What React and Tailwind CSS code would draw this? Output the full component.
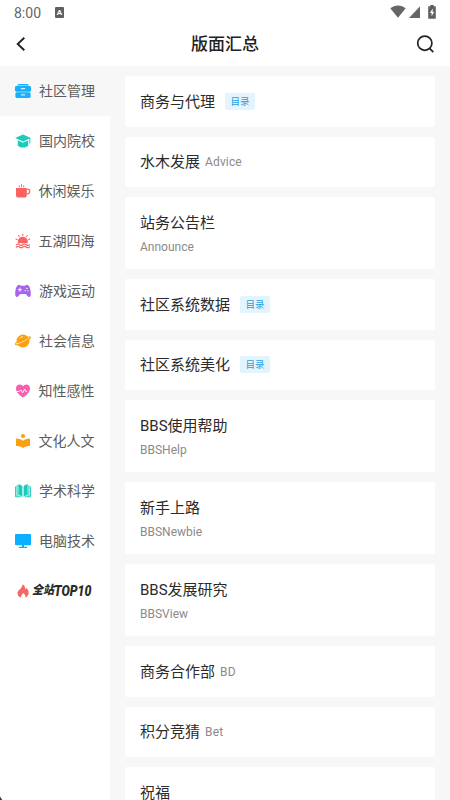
import React, { useState } from 'react'

const CabinetIcon = () => (
  <svg viewBox="0 0 16 16" className="w-4 h-4" fill="#16b0fb">
    <path d="M3.400 .9h9.200l1.600 1.600H1.800z" />
    <rect x="0" y="3.100" width="16" height="5.600" rx="1.400" />
    <rect x="0.400" y="9.300" width="15.200" height="5.600" rx="1.400" />
    <path d="M6.300 5.700h3.400M6.300 11.900h3.400" stroke="#fff" strokeWidth="1" strokeLinecap="round" />
  </svg>
)

const SchoolIcon = () => (
  <svg viewBox="0 0 16 16" className="w-4 h-4" fill="#1bcbbb">
    <path d="M8 1.500 15.800 5 8 8.600.2 5z" />
    <path d="M2.800 7.300 8 9.700l5.200-2.400v5.400C11.600 14 9.900 14.600 8 14.600S4.400 14 2.800 12.700z" />
    <path d="M14.300 5h1v5.600h-1z" />
  </svg>
)

const CupIcon = () => (
  <svg viewBox="0 0 16 16" className="w-4 h-4" fill="#fa6262">
    <path d="M1 5h10.800v7a2.600 2.600 0 0 1-2.600 2.600H3.600A2.600 2.600 0 0 1 1 12z" />
    <path d="M11.500 6.100h1.200c1.400 0 2 .8 2 2.100 0 1.700-.9 2.800-3.200 3" fill="none" stroke="#fa6262" strokeWidth="1.300" />
    <path d="M4.300 4V2.600M6.500 4V1.200M8.700 4V2.600" stroke="#fa6262" strokeWidth=".9" strokeLinecap="round" />
  </svg>
)

const SunsetIcon = () => (
  <svg viewBox="0 0 16 16" className="w-4 h-4" fill="none" stroke="#fa6262" strokeLinecap="round">
    <path d="M3 10.400C2.200 6.600 4.600 3.800 7.800 3.800s5.700 2.800 4.900 6.600l-2.400-.5-2.500.7-2.500-.7z" fill="#fa6262" stroke="none" />
    <path d="M7.800 2.500V1.300M4.300 3.500l-.8-1M11.400 3.500l.8-1M2 6.600l-1-.5M13.700 6.600l1-.5" strokeWidth="1.100" />
    <path d="M1.300 11.700q1.600-1.400 3.200 0t3.300 0 3.300 0 3.300 0M1.300 14q1.600-1.400 3.200 0t3.300 0 3.300 0 3.300 0" strokeWidth="1.200" />
  </svg>
)

const GamepadIcon = () => (
  <svg viewBox="0 0 16 16" className="w-4 h-4" fill="#a566ed">
    <path d="M3.200 2.100c1.500-.6 2.300.4 3.100.7h3.400c.8-.3 1.600-1.300 3.100-.7 1.900.8 3 5 3 9.200 0 2.900-2.300 3.500-3.500 1.500-.7-1.200-1.200-1.900-2.200-1.900H5.900c-1 0-1.500.7-2.200 1.900C2.500 14.800.2 14.200.2 11.300c0-4.200 1.100-8.400 3-9.200z" />
    <path d="M4.900 5.100v3.200M3.300 6.700h3.200" stroke="#fff" strokeWidth="1" strokeLinecap="round" />
    <circle cx="11.900" cy="5.400" r=".7" fill="#fff" />
    <circle cx="10.200" cy="7.600" r=".7" fill="#fff" />
    <circle cx="12.900" cy="7.800" r=".6" fill="#fff" />
  </svg>
)

const PlanetIcon = () => (
  <svg viewBox="0 0 16 16" className="w-4 h-4">
    <circle cx="8" cy="8" r="6.500" fill="#fca012" />
    <path d="M2 9.200C1 10.300.8 11 1.200 11.500c1.200.7 4.900-.5 8.100-2.200 3.200-1.800 5.600-3.700 5.900-4.700" fill="none" stroke="#fff" strokeWidth=".8" transform="translate(0 -1.200)" />
    <path d="M2 8.500C.8 9.700.2 10.600.7 11.100c.9.800 5-.5 8.300-2.300 3.500-1.900 6.600-3.900 6.300-4.900-.2-.6-1.200-.4-2.100-.1" fill="none" stroke="#fca012" strokeWidth="1.100" transform="translate(0 .4)" />
    <path d="M5.200 4.700q1-1.100 2.400-1" fill="none" stroke="#fff" strokeWidth=".8" strokeLinecap="round" />
  </svg>
)

const HeartIcon = () => (
  <svg viewBox="0 0 16 16" className="w-4 h-4">
    <path d="M8 14.600C4.700 12.300 1 9.300 1 5.500 1 3.100 2.600 1.500 4.600 1.500c1.500 0 2.700.7 3.400 1.900.7-1.200 1.900-1.900 3.400-1.900C13.400 1.500 15 3.100 15 5.500c0 3.800-3.700 6.800-7 9.100z" fill="#f95faf" />
    <path d="M2 8.500h2.300l1.400-1.600 1.900 3 2-3.700 1.300 2.300H12" fill="none" stroke="#fff" strokeWidth=".9" strokeLinejoin="round" />
  </svg>
)

const ReaderIcon = () => (
  <svg viewBox="0 0 16 16" className="w-4 h-4" fill="#fca012">
    <circle cx="8" cy="3" r="2.100" />
    <path d="M1 5.500c2.700 0 5 .7 7 2.200 2-1.500 4.300-2.200 7-2.200v7.400c-2.700 0-5 .6-7 2-2-1.400-4.300-2-7-2z" />
  </svg>
)

const BookIcon = () => (
  <svg viewBox="0 0 16 16" className="w-4 h-4" fill="#1bcbbb">
    <path d="M3.300 1.300c1.700.1 3.100.8 4.100 2v10.800c-1-1.300-2.400-2-4.100-2.200zM12.700 1.300c-1.700.1-3.100.8-4.100 2v10.800c1-1.300 2.400-2 4.100-2.200z" />
    <path d="M2.100 2.200v10.900q2.600-.1 4.100 1.100M13.900 2.200v10.900q-2.600-.1-4.100 1.100M.6 3.500v10.300h3M15.400 3.500v10.300h-3" fill="none" stroke="#1bcbbb" strokeWidth="1" />
  </svg>
)

const MonitorIcon = () => (
  <svg viewBox="0 0 16 16" className="w-4 h-4" fill="#08b0ff">
    <rect x="0" y="1" width="16" height="11.200" rx="1" />
    <path d="M7 12h2v1.700h2.600q.6 0 .6.600t-.6.600H4.400q-.6 0-.6-.6t.6-.6H7z" />
  </svg>
)

const categories = [
  { name: '社区管理', icon: CabinetIcon },
  { name: '国内院校', icon: SchoolIcon },
  { name: '休闲娱乐', icon: CupIcon, narrow: true },
  { name: '五湖四海', icon: SunsetIcon, narrow: true },
  { name: '游戏运动', icon: GamepadIcon },
  { name: '社会信息', icon: PlanetIcon },
  { name: '知性感性', icon: HeartIcon, narrow: true },
  { name: '文化人文', icon: ReaderIcon, narrow: true },
  { name: '学术科学', icon: BookIcon },
  { name: '电脑技术', icon: MonitorIcon },
]

const boards = [
  { title: '商务与代理', folder: true },
  { title: '水木发展', sub: 'Advice' },
  { title: '站务公告栏', sub: 'Announce', stacked: true },
  { title: '社区系统数据', folder: true },
  { title: '社区系统美化', folder: true },
  { title: 'BBS使用帮助', sub: 'BBSHelp', stacked: true },
  { title: '新手上路', sub: 'BBSNewbie', stacked: true },
  { title: 'BBS发展研究', sub: 'BBSView', stacked: true },
  { title: '商务合作部', sub: 'BD' },
  { title: '积分竞猜', sub: 'Bet' },
  { title: '祝福' },
]

function StatusBar() {
  return (
    <div className="h-6 shrink-0 flex items-center justify-between pl-[14px] pr-[14px] text-[#666]">
      <div className="flex items-center gap-[14px] pt-px">
        <span className="text-sm leading-none">8:00</span>
        <span className="w-[9px] h-[11px] -mt-px rounded-[1px] bg-[#606060] text-white text-[8px] leading-[11px] font-bold text-center">A</span>
      </div>
      <div className="flex items-center -mt-px">
        <svg viewBox="0 0 16 13" className="w-4 h-[13px]" fill="#666">
          <path d="M8 12.800.3 3.300C2.500 1.400 5.100.4 8 .4s5.500 1 7.700 2.900z" />
        </svg>
        <svg viewBox="0 0 11 12" className="ml-[3px] w-[11px] h-3" fill="#666">
          <path d="M11 .3V12H0z" />
        </svg>
        <svg viewBox="0 0 8 14" className="ml-2 w-2 h-[14px]" fill="#606060">
          <path d="M2.300 0h3.400v1.300h1.500q.6 0 .6.600v11.200q0 .6-.6.600H.8q-.6 0-.6-.6V1.900q0-.6.6-.6h1.500z" />
          <path d="M4.700 3.600 1.900 8h1.700v3.200L6.200 7H4.700z" fill="#fff" />
        </svg>
      </div>
    </div>
  )
}

function Header() {
  return (
    <div className="h-[42px] shrink-0 flex items-center justify-between pl-4 pr-4 pb-[2px]">
      <svg viewBox="0 0 10 14" className="w-[10px] h-[14px]" fill="none" stroke="#222" strokeWidth="1.900">
        <path d="M8.300.8 1.700 7l6.600 6.200" />
      </svg>
      <h1 className="text-[17px] leading-6 font-medium text-[#222] ml-2">版面汇总</h1>
      <svg viewBox="0 0 18 18" className="w-[18px] h-[18px]" fill="none" stroke="#222" strokeWidth="1.700">
        <circle cx="8.800" cy="8.200" r="7.100" />
        <path d="m13.600 13.300 3.700 3.900" />
      </svg>
    </div>
  )
}

function Sidebar() {
  const [active, setActive] = useState(0)

  return (
    <div className="w-[110px] shrink-0 bg-white">
      {categories.map((c, i) => (
        <button
          key={c.name}
          onClick={() => setActive(i)}
          className={`w-full h-[50px] flex items-center gap-2 text-sm text-[#5c5c5c] ${c.narrow ? 'pl-[14.5px]' : 'pl-[15px]'} ${i === active ? 'bg-[#f7f7f7]' : 'bg-white'}`}
        >
          <c.icon />
          <span className="whitespace-nowrap">{c.name}</span>
        </button>
      ))}
      <button className="w-full h-[50px] flex items-center pl-[17px] gap-[3px]">
        <svg viewBox="0 0 12 14" className="w-3 h-[14px] shrink-0" fill="#f96464">
          <path d="M5.500.3C8.200 2 8.400 4 8.300 5.200c.7-.3 1-.8 1.100-1.500 1.500 1.700 2.300 3.500 2.200 5.300-.1 2.200-1.400 3.900-3.300 4.600.5-1.700-.2-3-1.900-4.600-1.600 1.300-2.600 2.800-2.200 4.600C1.800 12.900.4 11.300.5 9c.1-2.900 4.900-4.200 5-8.700z" />
        </svg>
        <span className="flex items-center italic text-[#2b2b2b] whitespace-nowrap pt-px">
          <span className="text-[11px] font-black origin-left scale-y-110">全站</span>
          <span className="text-[15.5px] w-0 font-black origin-left scale-x-80">TOP10</span>
        </span>
      </button>
    </div>
  )
}

function BoardCard({ board }) {
  return (
    <div
      className={`w-[310.5px] shrink-0 bg-white rounded-xs px-[15.5px] text-[15px] text-[#2b2b2b] flex ${board.stacked ? 'h-[72px] flex-col justify-center pt-1' : 'h-[50.5px] items-center pt-px'}`}
    >
      <span className="leading-6 whitespace-nowrap">{board.title}</span>
      {board.folder && (
        <span className="ml-[10px] -mt-px h-[17px] w-[30px] text-center rounded-xs bg-[#e4f4fd] text-[#1c9fe2] text-[9.5px] leading-[17px]">目录</span>
      )}
      {board.sub && (
        <span className={`text-xs text-[#8a8a8a] ${board.stacked ? 'leading-6' : 'ml-[5px] tracking-[0.15px]'}`}>{board.sub}</span>
      )}
    </div>
  )
}

export default function App() {
  return (
    <div className="relative w-[450px] h-[800px] overflow-hidden bg-white flex flex-col font-['Roboto','Noto_Sans_CJK_SC',sans-serif]">
      <StatusBar />
      <Header />
      <div className="flex-1 min-h-0 flex bg-[#f7f7f7]">
        <Sidebar />
        <div className="flex-1 overflow-hidden flex flex-col gap-[10px] pt-[10px] pl-[14.5px]">
          {boards.map((b) => (
            <BoardCard key={b.title} board={b} />
          ))}
        </div>
      </div>
      <svg viewBox="0 0 3 4" className="absolute left-0 bottom-0 w-[3px] h-1" fill="#333">
        <path d="M0 .5 2.200 4H0z" />
      </svg>
    </div>
  )
}
